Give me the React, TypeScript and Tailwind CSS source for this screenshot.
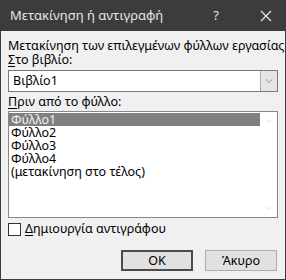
import { ChevronDown, ChevronUp } from "lucide-react";

const SHEETS = ["Φύλλο1", "Φύλλο2", "Φύλλο3", "Φύλλο4", "(μετακίνηση στο τέλος)"];

export default function App() {
  return (
    <div
      className="w-[286px] h-[280px] flex flex-col bg-[#f0f0f0] border border-[#3c3c3c] text-[12.5px] text-black overflow-hidden whitespace-nowrap"
      style={{ fontFamily: "'Noto Sans', 'DejaVu Sans', sans-serif" }}
    >
      {/* Title bar */}
      <div className="h-[30px] shrink-0 flex items-center bg-[#3c3c3c] text-[#e6e6e6] pl-[9px]">
        <span className="flex-1 text-[13px]">Μετακίνηση ή αντιγραφή</span>
        <span className="w-[14px] text-[13px] mr-[37px] text-center">?</span>
        <svg width="12" height="12" viewBox="0 0 12 12" className="mr-[13px]">
          <path d="M1 1L11 11M11 1L1 11" stroke="#e6e6e6" strokeWidth="1.2" />
        </svg>
      </div>

      <div className="flex-1 flex flex-col px-[7px] pt-[8px]">
        <div className="leading-[14px]">Μετακίνηση των επιλεγμένων φύλλων εργασίας</div>
        <div className="leading-[14px]">
          <span className="underline underline-offset-2">Σ</span>το βιβλίο:
        </div>

        {/* Combo */}
        <div className="mt-[3px] h-[22px] shrink-0 flex bg-white border border-[#7a7a7a]">
          <span className="flex-1 pl-[4px] leading-[20px]">Βιβλίο1</span>
          <div className="w-[17px] flex items-center justify-center bg-[#e5e5e5] border-l border-[#acacac]">
            <ChevronDown size={12} strokeWidth={1.2} color="#606060" />
          </div>
        </div>

        <div className="mt-[3px] leading-[14px]">
          <span className="underline underline-offset-2">Π</span>ριν από το φύλλο:
        </div>

        {/* List box */}
        <div className="mt-[2px] h-[107px] shrink-0 flex bg-white border border-[#828790]">
          <div className="flex-1 flex flex-col pt-[1px]">
            {SHEETS.map((s, i) => (
              <div
                key={s}
                className={`h-[13px] leading-[13px] pl-[2px] ${i === 0 ? "bg-[#7f7f7f] text-[#f0f0f0]" : ""}`}
              >
                {s}
              </div>
            ))}
          </div>
          <div className="w-[17px] flex flex-col justify-between items-center py-[4px]">
            <ChevronUp size={10} strokeWidth={1.2} color="#c2c2c2" />
            <ChevronDown size={10} strokeWidth={1.2} color="#c2c2c2" />
          </div>
        </div>

        {/* Checkbox */}
        <div className="mt-[4px] h-[14px] flex items-center">
          <div className="w-[13px] h-[13px] bg-white border border-[#333333]" />
          <span className="ml-[4px] leading-[14px]">
            <span className="underline underline-offset-2">Δ</span>ημιουργία αντιγράφου
          </span>
        </div>

        {/* Buttons */}
        <div className="mt-[14px] flex justify-end gap-[12px] pr-[1px]">
          <button className="w-[72px] h-[21px] bg-[#e1e1e1] border-2 border-[#4c4c4c] leading-[16px]">OK</button>
          <button className="w-[72px] h-[21px] bg-[#e1e1e1] border border-[#adadad] leading-[18px]">Άκυρο</button>
        </div>
      </div>
    </div>
  );
}
